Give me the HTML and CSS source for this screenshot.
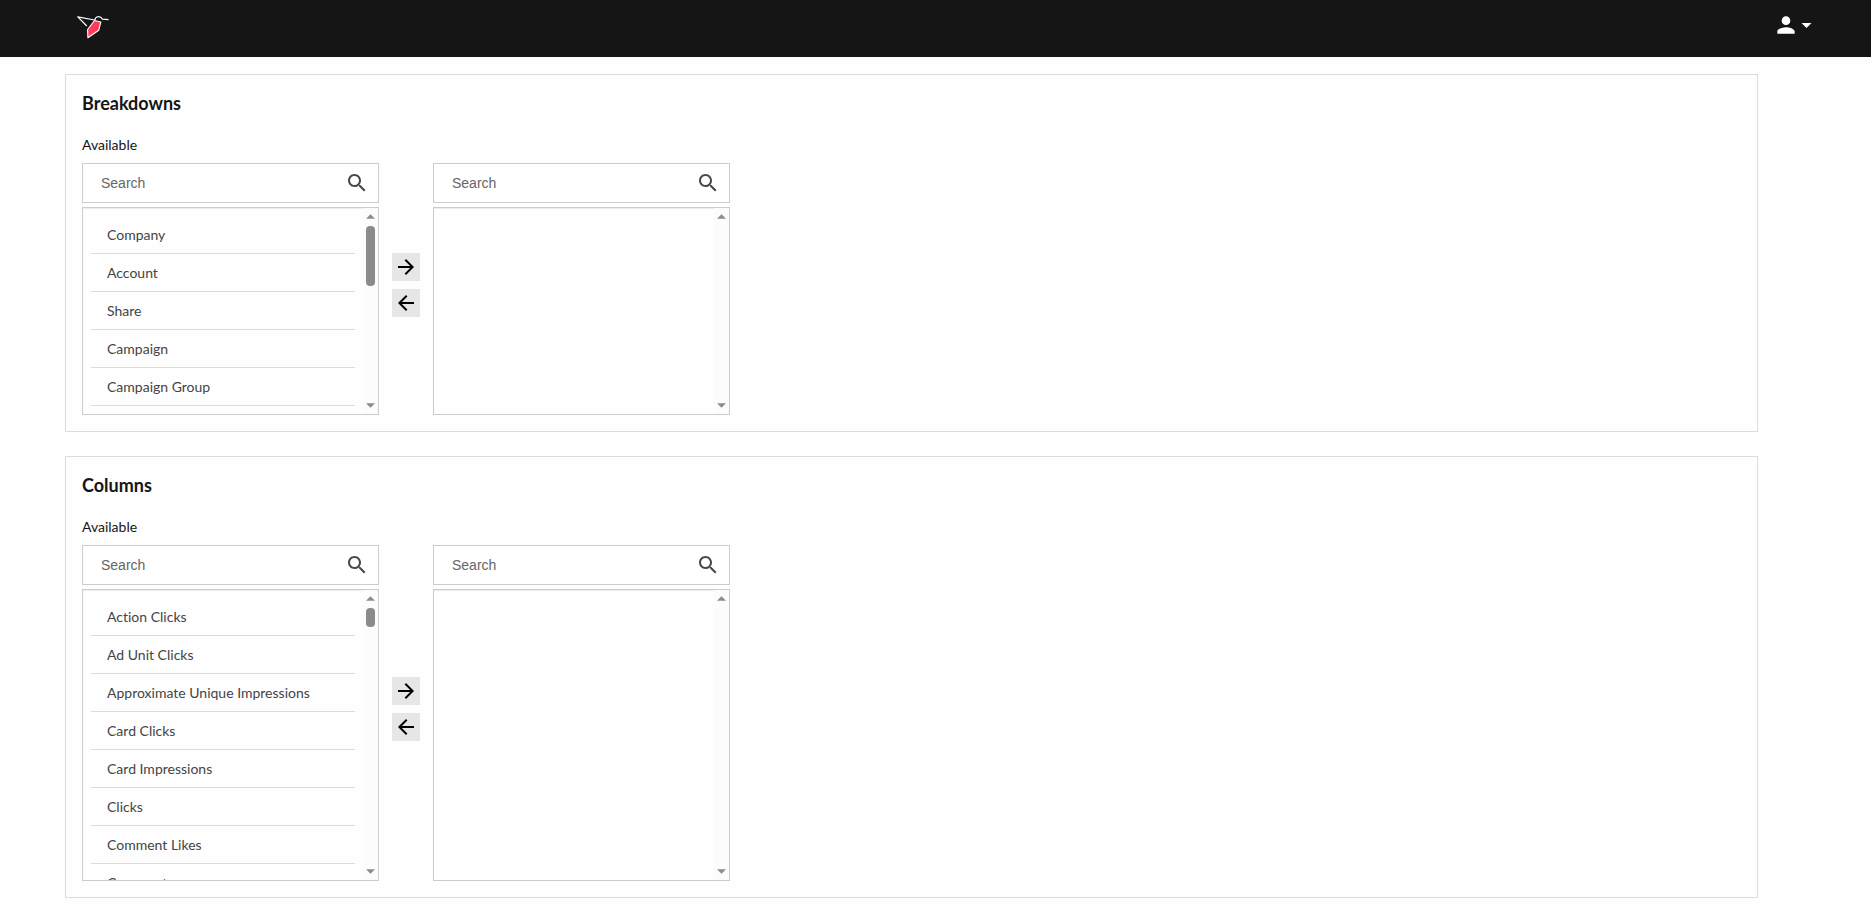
FILE: index.html
```html
<!DOCTYPE html>
<html lang="en">
<head>
    <meta charset="UTF-8">
    <meta name="viewport" content="width=device-width, initial-scale=1.0">
    <title>Report Builder</title>
    <link rel="stylesheet" href="styles.css">
</head>
<body>
    <svg class="sprite" aria-hidden="true">
        <symbol id="icon-search" viewBox="0 0 24 24">
            <path d="M15.5 14h-.79l-.28-.27C15.41 12.59 16 11.11 16 9.5 16 5.91 13.09 3 9.5 3S3 5.91 3 9.5 5.91 16 9.5 16c1.61 0 3.09-.59 4.23-1.57l.27.28v.79l5 4.99L20.49 19l-4.99-5zm-6 0C7.01 14 5 11.99 5 9.5S7.01 5 9.5 5 14 7.01 14 9.5 11.99 14 9.5 14z"/>
        </symbol>
        <symbol id="icon-forward" viewBox="0 0 24 24">
            <path d="M12 4l-1.41 1.41L16.17 11H4v2h12.17l-5.58 5.59L12 20l8-8z"/>
        </symbol>
        <symbol id="icon-back" viewBox="0 0 24 24">
            <path d="M20 11H7.83l5.59-5.59L12 4l-8 8 8 8 1.41-1.41L7.83 13H20v-2z"/>
        </symbol>
        <symbol id="icon-up" viewBox="0 0 10 5">
            <path d="M5 0l5 5H0z"/>
        </symbol>
        <symbol id="icon-down" viewBox="0 0 10 5">
            <path d="M0 0h10L5 5z"/>
        </symbol>
    </svg>

    <header class="navbar">
        <a class="logo" href="#" aria-label="Home">
            <svg width="34" height="25" viewBox="0 0 34 25" fill="none" stroke="#fff" stroke-linejoin="round">
                <path d="M10.8 10L1.8 .8 18.5 4" stroke-width="1.2"/>
                <path d="M18.5 4.5L24.8 6 22.8 14.2 11.9 21.8 11.6 13.5z" fill="#ff3b5c" stroke-width="1.1"/>
                <path d="M18.8 4.2C19.3 -.2 24.6 -.3 26.5 3.2L32.5 3.6" stroke-width="1.2"/>
            </svg>
        </a>
        <button class="user-menu" type="button" aria-label="Account menu">
            <svg width="26" height="26" viewBox="0 0 24 24">
                <path d="M12 12c2.21 0 4-1.79 4-4s-1.79-4-4-4-4 1.79-4 4 1.79 4 4 4zm0 2c-2.67 0-8 1.34-8 4v2h16v-2c0-2.66-5.33-4-8-4z"/>
            </svg>
            <svg width="11" height="5"><use href="#icon-down"/></svg>
        </button>
    </header>

    <main class="content">
        <section class="card">
            <h2 class="card-title">Breakdowns</h2>
            <label class="card-label" for="breakdownSearch">Available</label>
            <div class="picker">
                <div class="column">
                    <div class="search-box">
                        <input class="search-input" id="breakdownSearch" type="text" placeholder="Search">
                        <svg class="search-icon"><use href="#icon-search"/></svg>
                    </div>
                    <div class="list-box">
                        <ul class="list">
                            <li class="list-item">Company</li>
                            <li class="list-item">Account</li>
                            <li class="list-item">Share</li>
                            <li class="list-item">Campaign</li>
                            <li class="list-item">Campaign Group</li>
                        </ul>
                        <div class="scrollbar">
                            <svg class="scroll-arrow"><use href="#icon-up"/></svg>
                            <div class="scroll-thumb"></div>
                            <svg class="scroll-arrow"><use href="#icon-down"/></svg>
                        </div>
                    </div>
                </div>
                <div class="move-buttons">
                    <button class="move-btn" type="button" aria-label="Add"><svg class="move-icon"><use href="#icon-forward"/></svg></button>
                    <button class="move-btn" type="button" aria-label="Remove"><svg class="move-icon"><use href="#icon-back"/></svg></button>
                </div>
                <div class="column">
                    <div class="search-box">
                        <input class="search-input" type="text" placeholder="Search" aria-label="Search selected breakdowns">
                        <svg class="search-icon"><use href="#icon-search"/></svg>
                    </div>
                    <div class="list-box">
                        <ul class="list"></ul>
                        <div class="scrollbar">
                            <svg class="scroll-arrow"><use href="#icon-up"/></svg>
                            <svg class="scroll-arrow"><use href="#icon-down"/></svg>
                        </div>
                    </div>
                </div>
            </div>
        </section>

        <section class="card card-tall">
            <h2 class="card-title">Columns</h2>
            <label class="card-label" for="columnSearch">Available</label>
            <div class="picker">
                <div class="column">
                    <div class="search-box">
                        <input class="search-input" id="columnSearch" type="text" placeholder="Search">
                        <svg class="search-icon"><use href="#icon-search"/></svg>
                    </div>
                    <div class="list-box">
                        <ul class="list">
                            <li class="list-item">Action Clicks</li>
                            <li class="list-item">Ad Unit Clicks</li>
                            <li class="list-item">Approximate Unique Impressions</li>
                            <li class="list-item">Card Clicks</li>
                            <li class="list-item">Card Impressions</li>
                            <li class="list-item">Clicks</li>
                            <li class="list-item">Comment Likes</li>
                            <li class="list-item">Comments</li>
                        </ul>
                        <div class="scrollbar">
                            <svg class="scroll-arrow"><use href="#icon-up"/></svg>
                            <div class="scroll-thumb"></div>
                            <svg class="scroll-arrow"><use href="#icon-down"/></svg>
                        </div>
                    </div>
                </div>
                <div class="move-buttons">
                    <button class="move-btn" type="button" aria-label="Add"><svg class="move-icon"><use href="#icon-forward"/></svg></button>
                    <button class="move-btn" type="button" aria-label="Remove"><svg class="move-icon"><use href="#icon-back"/></svg></button>
                </div>
                <div class="column">
                    <div class="search-box">
                        <input class="search-input" type="text" placeholder="Search" aria-label="Search selected columns">
                        <svg class="search-icon"><use href="#icon-search"/></svg>
                    </div>
                    <div class="list-box">
                        <ul class="list"></ul>
                        <div class="scrollbar">
                            <svg class="scroll-arrow"><use href="#icon-up"/></svg>
                            <svg class="scroll-arrow"><use href="#icon-down"/></svg>
                        </div>
                    </div>
                </div>
            </div>
        </section>
    </main>
</body>
</html>
```
FILE: styles.css
```css
* {
    margin: 0;
    padding: 0;
    box-sizing: border-box;
}
body {
    font-family: Lato, sans-serif;
    font-size: 14px;
    line-height: 21px;
    font-variant-ligatures: none;
    color: #151515;
    background: #fefefe;
}
svg {
    display: block;
    flex: none;
}
.sprite {
    display: none;
}
.navbar {
    display: flex;
    align-items: center;
    justify-content: space-between;
    height: 57px;
    padding: 0 59px 0 76px;
    background: #151515;
}
.user-menu {
    display: flex;
    align-items: center;
    gap: 2px;
    padding-bottom: 7px;
    background: none;
    border: none;
    fill: #fff;
    cursor: pointer;
}
.content {
    display: flex;
    flex-direction: column;
    gap: 24px;
    padding: 17px 113px 12px 65px;
}
.card {
    padding: 16px;
    border: 1px solid #dcdcdc;
}
.card-title {
    font-size: 18px;
    line-height: 24px;
    font-weight: 700;
    margin-bottom: 19px;
}
.card-label {
    display: block;
    margin-bottom: 8px;
}
.picker {
    display: flex;
    gap: 13px;
}
.column {
    display: flex;
    flex-direction: column;
    gap: 4px;
    width: 297px;
}
.search-box {
    display: flex;
    align-items: center;
    height: 40px;
    padding: 0 9px 0 18px;
    border: 1px solid #ccc;
    background: #fff;
}
.search-input {
    flex: 1;
    min-width: 0;
    font-family: "Liberation Sans", Arial, sans-serif;
    font-size: 14px;
    line-height: 21px;
    color: #151515;
    background: none;
    border: none;
    outline: none;
}
.search-input::placeholder {
    color: #666;
}
.search-icon,
.move-icon {
    width: 24px;
    height: 24px;
}
.search-icon {
    fill: #444a48;
}
.list-box {
    display: flex;
    height: 208px;
    border: 1px solid #ccc;
    box-shadow: inset 0 1px 1px rgba(0, 0, 0, 0.075);
}
.card-tall .list-box {
    height: 292px;
}
.list {
    flex: 1;
    padding: 8px 8px 0;
    list-style: none;
    overflow: hidden;
}
.list-item {
    padding: 8px 16px;
    border-bottom: 1px solid #dcdcdc;
    color: #444;
}
.scrollbar {
    display: flex;
    flex-direction: column;
    align-items: center;
    gap: 7px;
    width: 15px;
    padding: 6px 0;
    background: #fcfcfc;
}
.scroll-arrow {
    width: 9px;
    height: 5px;
    fill: #8b8b8b;
}
.scroll-arrow:last-child {
    margin-top: auto;
}
.scroll-thumb {
    width: 9px;
    height: 60px;
    border-radius: 4px;
    background: #8b8b8b;
}
.card-tall .scroll-thumb {
    height: 19px;
}
.move-buttons {
    display: flex;
    flex-direction: column;
    justify-content: center;
    gap: 8px;
    padding-bottom: 8px;
}
.move-btn {
    display: flex;
    align-items: center;
    justify-content: center;
    width: 28px;
    height: 28px;
    background: #e6e6e6;
    border: none;
    cursor: pointer;
}
```
